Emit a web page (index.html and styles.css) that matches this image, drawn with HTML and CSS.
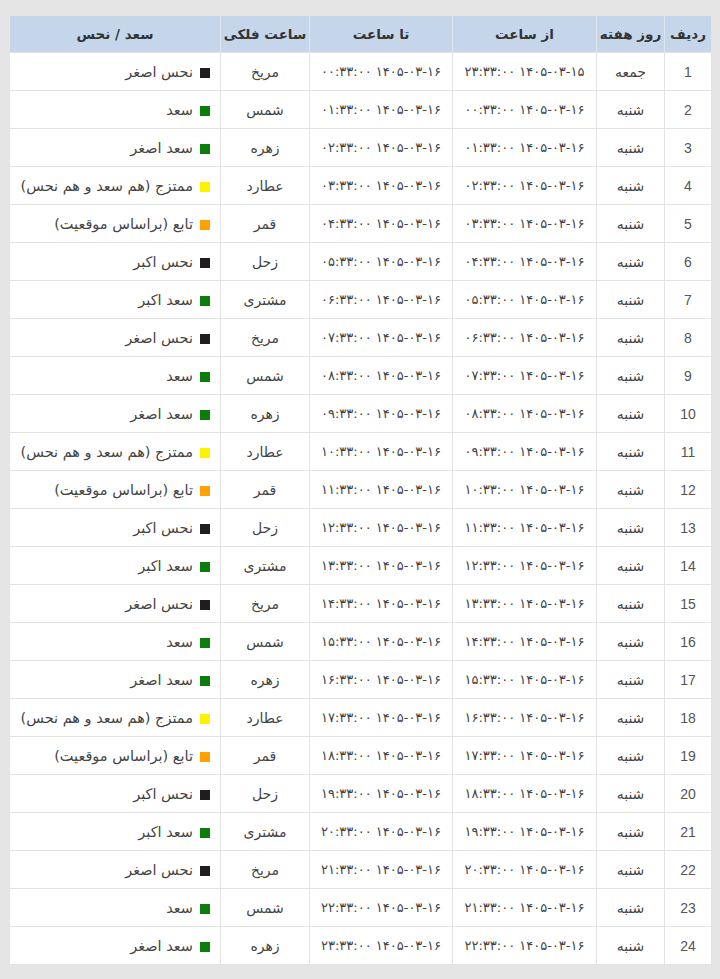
FILE: index.html
```html
<!DOCTYPE html>
<html lang="fa" dir="rtl">
<head>
<meta charset="utf-8">
<link rel="stylesheet" href="styles.css">
</head>
<body>
<div class="wrap">
<table class="hours">
<colgroup>
<col class="c-num"><col class="c-day"><col class="c-from"><col class="c-to"><col class="c-planet"><col class="c-state">
</colgroup>
<thead>
<tr><th>ردیف</th><th>روز هفته</th><th>از ساعت</th><th>تا ساعت</th><th>ساعت فلکی</th><th>سعد / نحس</th></tr>
</thead>
<tbody>
<tr><td class="num">1</td><td>جمعه</td><td class="dt">۱۴۰۵-۰۳-۱۵ ۲۳:۳۳:۰۰</td><td class="dt">۱۴۰۵-۰۳-۱۶ ۰۰:۳۳:۰۰</td><td>مریخ</td><td class="state"><span class="sq black"></span>نحس اصغر</td></tr>
<tr><td class="num">2</td><td>شنبه</td><td class="dt">۱۴۰۵-۰۳-۱۶ ۰۰:۳۳:۰۰</td><td class="dt">۱۴۰۵-۰۳-۱۶ ۰۱:۳۳:۰۰</td><td>شمس</td><td class="state"><span class="sq green"></span>سعد</td></tr>
<tr><td class="num">3</td><td>شنبه</td><td class="dt">۱۴۰۵-۰۳-۱۶ ۰۱:۳۳:۰۰</td><td class="dt">۱۴۰۵-۰۳-۱۶ ۰۲:۳۳:۰۰</td><td>زهره</td><td class="state"><span class="sq green"></span>سعد اصغر</td></tr>
<tr><td class="num">4</td><td>شنبه</td><td class="dt">۱۴۰۵-۰۳-۱۶ ۰۲:۳۳:۰۰</td><td class="dt">۱۴۰۵-۰۳-۱۶ ۰۳:۳۳:۰۰</td><td>عطارد</td><td class="state"><span class="sq yellow"></span>ممتزج (هم سعد و هم نحس)</td></tr>
<tr><td class="num">5</td><td>شنبه</td><td class="dt">۱۴۰۵-۰۳-۱۶ ۰۳:۳۳:۰۰</td><td class="dt">۱۴۰۵-۰۳-۱۶ ۰۴:۳۳:۰۰</td><td>قمر</td><td class="state"><span class="sq orange"></span>تابع (براساس موقعیت)</td></tr>
<tr><td class="num">6</td><td>شنبه</td><td class="dt">۱۴۰۵-۰۳-۱۶ ۰۴:۳۳:۰۰</td><td class="dt">۱۴۰۵-۰۳-۱۶ ۰۵:۳۳:۰۰</td><td>زحل</td><td class="state"><span class="sq black"></span>نحس اکبر</td></tr>
<tr><td class="num">7</td><td>شنبه</td><td class="dt">۱۴۰۵-۰۳-۱۶ ۰۵:۳۳:۰۰</td><td class="dt">۱۴۰۵-۰۳-۱۶ ۰۶:۳۳:۰۰</td><td>مشتری</td><td class="state"><span class="sq green"></span>سعد اکبر</td></tr>
<tr><td class="num">8</td><td>شنبه</td><td class="dt">۱۴۰۵-۰۳-۱۶ ۰۶:۳۳:۰۰</td><td class="dt">۱۴۰۵-۰۳-۱۶ ۰۷:۳۳:۰۰</td><td>مریخ</td><td class="state"><span class="sq black"></span>نحس اصغر</td></tr>
<tr><td class="num">9</td><td>شنبه</td><td class="dt">۱۴۰۵-۰۳-۱۶ ۰۷:۳۳:۰۰</td><td class="dt">۱۴۰۵-۰۳-۱۶ ۰۸:۳۳:۰۰</td><td>شمس</td><td class="state"><span class="sq green"></span>سعد</td></tr>
<tr><td class="num">10</td><td>شنبه</td><td class="dt">۱۴۰۵-۰۳-۱۶ ۰۸:۳۳:۰۰</td><td class="dt">۱۴۰۵-۰۳-۱۶ ۰۹:۳۳:۰۰</td><td>زهره</td><td class="state"><span class="sq green"></span>سعد اصغر</td></tr>
<tr><td class="num">11</td><td>شنبه</td><td class="dt">۱۴۰۵-۰۳-۱۶ ۰۹:۳۳:۰۰</td><td class="dt">۱۴۰۵-۰۳-۱۶ ۱۰:۳۳:۰۰</td><td>عطارد</td><td class="state"><span class="sq yellow"></span>ممتزج (هم سعد و هم نحس)</td></tr>
<tr><td class="num">12</td><td>شنبه</td><td class="dt">۱۴۰۵-۰۳-۱۶ ۱۰:۳۳:۰۰</td><td class="dt">۱۴۰۵-۰۳-۱۶ ۱۱:۳۳:۰۰</td><td>قمر</td><td class="state"><span class="sq orange"></span>تابع (براساس موقعیت)</td></tr>
<tr><td class="num">13</td><td>شنبه</td><td class="dt">۱۴۰۵-۰۳-۱۶ ۱۱:۳۳:۰۰</td><td class="dt">۱۴۰۵-۰۳-۱۶ ۱۲:۳۳:۰۰</td><td>زحل</td><td class="state"><span class="sq black"></span>نحس اکبر</td></tr>
<tr><td class="num">14</td><td>شنبه</td><td class="dt">۱۴۰۵-۰۳-۱۶ ۱۲:۳۳:۰۰</td><td class="dt">۱۴۰۵-۰۳-۱۶ ۱۳:۳۳:۰۰</td><td>مشتری</td><td class="state"><span class="sq green"></span>سعد اکبر</td></tr>
<tr><td class="num">15</td><td>شنبه</td><td class="dt">۱۴۰۵-۰۳-۱۶ ۱۳:۳۳:۰۰</td><td class="dt">۱۴۰۵-۰۳-۱۶ ۱۴:۳۳:۰۰</td><td>مریخ</td><td class="state"><span class="sq black"></span>نحس اصغر</td></tr>
<tr><td class="num">16</td><td>شنبه</td><td class="dt">۱۴۰۵-۰۳-۱۶ ۱۴:۳۳:۰۰</td><td class="dt">۱۴۰۵-۰۳-۱۶ ۱۵:۳۳:۰۰</td><td>شمس</td><td class="state"><span class="sq green"></span>سعد</td></tr>
<tr><td class="num">17</td><td>شنبه</td><td class="dt">۱۴۰۵-۰۳-۱۶ ۱۵:۳۳:۰۰</td><td class="dt">۱۴۰۵-۰۳-۱۶ ۱۶:۳۳:۰۰</td><td>زهره</td><td class="state"><span class="sq green"></span>سعد اصغر</td></tr>
<tr><td class="num">18</td><td>شنبه</td><td class="dt">۱۴۰۵-۰۳-۱۶ ۱۶:۳۳:۰۰</td><td class="dt">۱۴۰۵-۰۳-۱۶ ۱۷:۳۳:۰۰</td><td>عطارد</td><td class="state"><span class="sq yellow"></span>ممتزج (هم سعد و هم نحس)</td></tr>
<tr><td class="num">19</td><td>شنبه</td><td class="dt">۱۴۰۵-۰۳-۱۶ ۱۷:۳۳:۰۰</td><td class="dt">۱۴۰۵-۰۳-۱۶ ۱۸:۳۳:۰۰</td><td>قمر</td><td class="state"><span class="sq orange"></span>تابع (براساس موقعیت)</td></tr>
<tr><td class="num">20</td><td>شنبه</td><td class="dt">۱۴۰۵-۰۳-۱۶ ۱۸:۳۳:۰۰</td><td class="dt">۱۴۰۵-۰۳-۱۶ ۱۹:۳۳:۰۰</td><td>زحل</td><td class="state"><span class="sq black"></span>نحس اکبر</td></tr>
<tr><td class="num">21</td><td>شنبه</td><td class="dt">۱۴۰۵-۰۳-۱۶ ۱۹:۳۳:۰۰</td><td class="dt">۱۴۰۵-۰۳-۱۶ ۲۰:۳۳:۰۰</td><td>مشتری</td><td class="state"><span class="sq green"></span>سعد اکبر</td></tr>
<tr><td class="num">22</td><td>شنبه</td><td class="dt">۱۴۰۵-۰۳-۱۶ ۲۰:۳۳:۰۰</td><td class="dt">۱۴۰۵-۰۳-۱۶ ۲۱:۳۳:۰۰</td><td>مریخ</td><td class="state"><span class="sq black"></span>نحس اصغر</td></tr>
<tr><td class="num">23</td><td>شنبه</td><td class="dt">۱۴۰۵-۰۳-۱۶ ۲۱:۳۳:۰۰</td><td class="dt">۱۴۰۵-۰۳-۱۶ ۲۲:۳۳:۰۰</td><td>شمس</td><td class="state"><span class="sq green"></span>سعد</td></tr>
<tr><td class="num">24</td><td>شنبه</td><td class="dt">۱۴۰۵-۰۳-۱۶ ۲۲:۳۳:۰۰</td><td class="dt">۱۴۰۵-۰۳-۱۶ ۲۳:۳۳:۰۰</td><td>زهره</td><td class="state"><span class="sq green"></span>سعد اصغر</td></tr>
</tbody>
</table>
</div>
</body>
</html>
```

FILE: styles.css
```css
html, body {
  margin: 0;
  padding: 0;
  background: #e5e5e5;
}
body {
  font-family: "DejaVu Sans", "Noto Sans", sans-serif;
  color: #444;
}
.wrap {
  padding: 16px 8px 14px 10px;
}
.hours {
  width: 702px;
  border-collapse: collapse;
  table-layout: fixed;
  background: #fff;
}
.c-num { width: 47px; }
.c-day { width: 68px; }
.c-from { width: 144px; }
.c-to { width: 143px; }
.c-planet { width: 89px; }
.c-state { width: 211px; }
.hours th {
  background: #c6d6ea;
  color: #333;
  font-weight: bold;
  font-size: 13.5px;
  height: 36px;
  padding: 0;
  text-align: center;
  border-left: 1px solid #dde5ef;
  border-right: 1px solid #dde5ef;
}
.hours td {
  height: 37px;
  padding: 0;
  text-align: center;
  font-size: 14px;
  border: 1px solid #e3e3e3;
  white-space: nowrap;
}
.hours td.dt {
  font-size: 13px;
}
.hours td.num {
  font-family: "Liberation Sans", sans-serif;
  font-size: 14px;
  color: #555;
}
.hours td.state {
  text-align: right;
  padding-right: 10px;
  font-size: 14.5px;
}
.sq {
  display: inline-block;
  width: 10px;
  height: 10px;
  margin-left: 7px;
  vertical-align: -1px;
}
.sq.black { background: #1e1e1e; }
.sq.green { background: #0a7d0a; }
.sq.yellow { background: #fff200; }
.sq.orange { background: #ffa100; }
```
